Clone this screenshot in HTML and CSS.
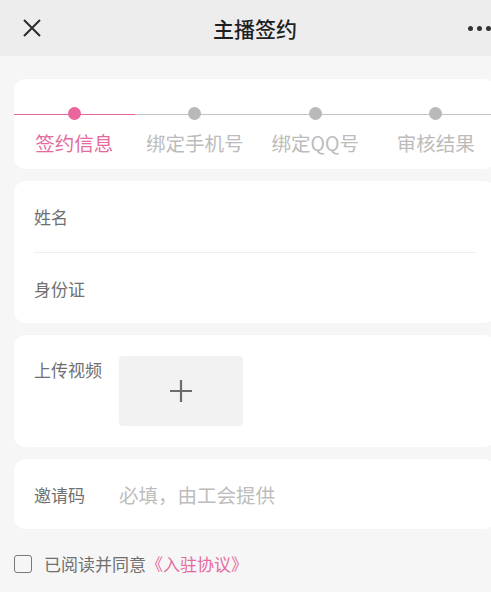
FILE: index.html
```html
<html>
    <head>
        <meta charset="utf-8">
        <link rel="stylesheet" href="styles.css">
    </head>
    <body>
    <div class="app">
        <div class="header">
            <div class="close">
                <svg width="18" height="18" viewBox="0 0 18 18"><path d="M1 1 L17 17 M17 1 L1 17" stroke="#2b2b2b" stroke-width="2" fill="none"/></svg>
            </div>
            <h1 class="title">主播签约</h1>
            <div class="more"><i></i><i></i><i></i></div>
        </div>

        <div class="content">
            <div class="card steps">
                <div class="step done"><span class="dot"></span><span class="label">签约信息</span></div>
                <div class="step"><span class="dot"></span><span class="label">绑定手机号</span></div>
                <div class="step"><span class="dot"></span><span class="label">绑定QQ号</span></div>
                <div class="step"><span class="dot"></span><span class="label">审核结果</span></div>
            </div>

            <div class="card">
                <div class="row line">姓名</div>
                <div class="row">身份证</div>
            </div>

            <div class="card upload">
                <div class="field">上传视频</div>
                <div class="addbox">
                    <svg width="24" height="24" viewBox="0 0 24 24"><path d="M12 1 V23 M1 12 H23" stroke="#6b6b6b" stroke-width="2.2" fill="none"/></svg>
                </div>
            </div>

            <div class="card">
                <div class="row">
                    <span class="field">邀请码</span>
                    <span class="hint">必填，由工会提供</span>
                </div>
            </div>

            <div class="agree">
                <span class="check"></span>
                <span>已阅读并同意<a class="link">《入驻协议》</a></span>
            </div>
        </div>
    </div>
    </body>
</html>
```

FILE: styles.css
```css
html, body {
    margin: 0;
    padding: 0;
    overflow: hidden;
    background-color: #f6f6f6;
    font-family: "Noto Sans CJK SC", "Noto Sans", sans-serif;
}
.app {
    width: 510px;
    height: 592px;
    background-color: #f6f6f6;
}
.header {
    height: 56px;
    background-color: #ededed;
    display: grid;
    grid-template-columns: 1fr auto 1fr;
    align-items: center;
}
.close {
    padding-left: 23px;
    display: flex;
}
.title {
    margin: 0;
    font-size: 21px;
    font-weight: 500;
    color: #1f1f1f;
}
.more {
    display: flex;
    justify-content: flex-end;
    gap: 4px;
    padding-right: 19px;
}
.more i {
    width: 5px;
    height: 5px;
    border-radius: 50%;
    background-color: #333;
}
.content {
    padding: 23px 14px 0 14px;
}
.card {
    background-color: white;
    border-radius: 12px;
    margin-bottom: 12px;
    padding: 0 20px;
}
.steps {
    display: grid;
    grid-template-columns: repeat(4, 1fr);
    padding: 0;
    height: 90px;
}
.step {
    display: flex;
    flex-direction: column;
    align-items: center;
    padding-top: 28px;
    background: linear-gradient(#c4c4c4, #c4c4c4) no-repeat 0 35px / 100% 1px;
}
.step .dot {
    width: 13px;
    height: 13px;
    border-radius: 50%;
    background-color: #b9b9b9;
}
.step .label {
    margin-top: 10px;
    font-size: 19.5px;
    line-height: 26px;
    color: #bcbcbc;
    white-space: nowrap;
}
.step.done {
    background-image: linear-gradient(#e8669b, #e8669b);
}
.step.done .dot {
    background-color: #e8669b;
}
.step.done .label {
    color: #e46a9e;
}
.row {
    height: 70px;
    display: flex;
    align-items: center;
    font-size: 17px;
    color: #707070;
}
.row.line {
    height: 71px;
    border-bottom: 1px solid #efefef;
}
.field {
    width: 85px;
    flex-shrink: 0;
    font-size: 17px;
    color: #707070;
}
.hint {
    font-size: 19.5px;
    color: #bdbdbd;
}
.upload {
    display: flex;
    padding-top: 21px;
    padding-bottom: 21px;
}
.upload .field {
    line-height: 26px;
    margin-top: 1px;
}
.addbox {
    width: 124px;
    height: 70px;
    background-color: #f2f2f2;
    border-radius: 4px;
    display: flex;
    align-items: center;
    justify-content: center;
}
.agree {
    display: flex;
    align-items: center;
    gap: 12px;
    margin-top: 22px;
    font-size: 17px;
    color: #707070;
}
.check {
    width: 16px;
    height: 16px;
    border: 1.5px solid #7a7a7a;
    border-radius: 3px;
}
.link {
    color: #e46a9e;
}
```
